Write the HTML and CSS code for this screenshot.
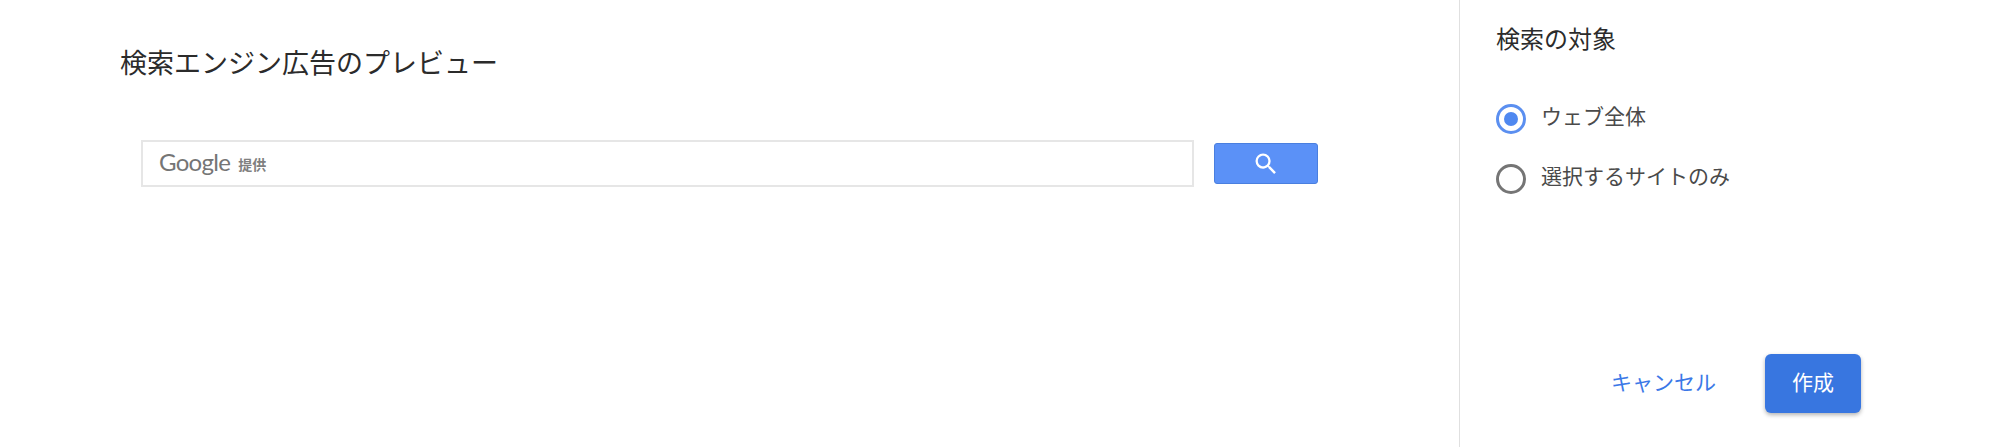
FILE: index.html
```html
<!DOCTYPE html>
<html lang="ja">
<head>
<meta charset="utf-8">
<title>検索エンジン広告のプレビュー</title>
<link rel="stylesheet" href="styles.css">
</head>
<body>
<div class="layout">
  <main class="preview">
    <h1 class="preview-title">検索エンジン広告のプレビュー</h1>
    <form class="search">
      <div class="search-box">
        <span class="brand">Google</span>
        <span class="provided">提供</span>
      </div>
      <button type="button" class="search-btn" aria-label="検索">
        <svg class="search-icon" viewBox="0 0 24 24"><path d="M15.5 14h-.79l-.28-.27A6.47 6.47 0 0 0 16 9.5 6.5 6.5 0 1 0 9.5 16c1.61 0 3.09-.59 4.23-1.57l.27.28v.79l5 4.99L20.49 19l-4.99-5zm-6 0C7.01 14 5 11.99 5 9.5S7.01 5 9.5 5 14 7.01 14 9.5 11.99 14 9.5 14z"/></svg>
      </button>
    </form>
  </main>
  <aside class="panel">
    <h2 class="panel-title">検索の対象</h2>
    <div class="options">
      <div class="option">
        <span class="radio radio-on"></span>
        <span class="option-label">ウェブ全体</span>
      </div>
      <div class="option">
        <span class="radio"></span>
        <span class="option-label">選択するサイトのみ</span>
      </div>
    </div>
    <div class="actions">
      <span class="cancel">キャンセル</span>
      <span class="create">作成</span>
    </div>
  </aside>
</div>
</body>
</html>
```

FILE: styles.css
```css
* { box-sizing: border-box; }
html, body { margin: 0; padding: 0; height: 447px; background: #fff; overflow: hidden; }
body { font-family: Roboto, "Noto Sans CJK JP", sans-serif; color: #212121; }
.layout { display: flex; height: 447px; }
.preview { width: 1460px; padding: 46px 0 0 120px; border-right: 1px solid #e0e0e0; }
.preview-title { margin: 0; font-size: 27px; line-height: 36px; font-weight: 400; color: #2b2b2b; white-space: nowrap; }
.search { display: flex; align-items: center; gap: 20px; margin: 58px 0 0 21px; }
.search-box { width: 1053px; height: 47px; border: 2px solid #e6e6e6; display: flex; align-items: center; padding-left: 16px; background: #fff; }
.brand { font-family: Lato, sans-serif; font-size: 24px; line-height: 30px; letter-spacing: -0.7px; color: #757575; margin-top: -3px; }
.provided { font-size: 14px; font-weight: 700; color: #808080; margin-left: 8px; }
.search-btn { width: 104px; height: 41px; padding: 0; background: #5b91f7; border: 1px solid #4a7fdf; border-radius: 3px; display: flex; align-items: center; justify-content: center; }
.search-icon { width: 28px; height: 28px; fill: #fff; display: block; }
.panel { flex: 1; padding: 22px 0 0 36px; display: flex; flex-direction: column; height: 447px; }
.panel-title { margin: 0; font-size: 24px; line-height: 36px; font-weight: 400; color: #2b2b2b; }
.options { margin-top: 43px; display: flex; flex-direction: column; gap: 24px; }
.option { display: flex; align-items: center; height: 36px; gap: 15px; }
.radio { width: 30px; height: 30px; border-radius: 50%; border: 3px solid #757575; flex: none; position: relative; background: #fff; }
.radio-on { border-color: #5b8ff0; }
.radio-on::after { content: ""; position: absolute; left: 5px; top: 5px; width: 14px; height: 14px; border-radius: 50%; background: #4f88f0; }
.option-label { font-size: 21px; color: #4a4a4a; line-height: 30px; white-space: nowrap; margin-top: -4px; }
.actions { display: flex; align-items: center; margin-top: auto; margin-bottom: 34px; padding-left: 115px; gap: 49px; }
.cancel { font-size: 21px; color: #3b78e7; white-space: nowrap; margin-bottom: 5px; }
.create { width: 96px; height: 59px; padding-bottom: 5px; border-radius: 6px; background: #3876e0; color: #fff; font-size: 21px; display: flex; align-items: center; justify-content: center; box-shadow: 0 2px 4px rgba(0,0,0,.3); }
```
